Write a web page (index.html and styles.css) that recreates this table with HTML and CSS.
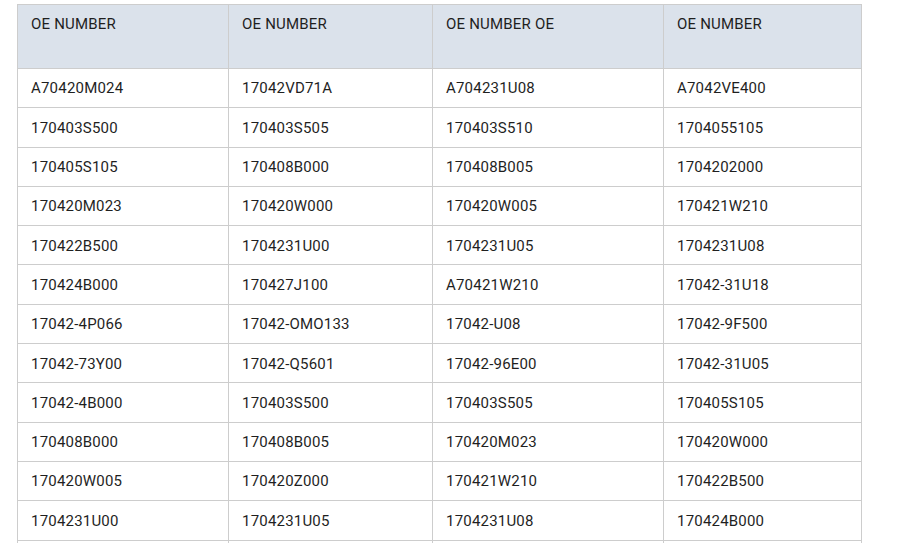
FILE: index.html
```html
<!DOCTYPE html>
<html>
<head>
<meta charset="utf-8">
<link rel="stylesheet" href="styles.css">
</head>
<body>
<div class="wrap">
<table class="oe-table">
<colgroup>
<col class="c1"><col class="c2"><col class="c3"><col class="c4">
</colgroup>
<thead>
<tr><th>OE NUMBER</th><th>OE NUMBER</th><th>OE NUMBER OE</th><th>OE NUMBER</th></tr>
</thead>
<tbody>
<tr><td>A70420M024</td><td>17042VD71A</td><td>A704231U08</td><td>A7042VE400</td></tr>
<tr><td>170403S500</td><td>170403S505</td><td>170403S510</td><td>1704055105</td></tr>
<tr><td>170405S105</td><td>170408B000</td><td>170408B005</td><td>1704202000</td></tr>
<tr><td>170420M023</td><td>170420W000</td><td>170420W005</td><td>170421W210</td></tr>
<tr><td>170422B500</td><td>1704231U00</td><td>1704231U05</td><td>1704231U08</td></tr>
<tr><td>170424B000</td><td>170427J100</td><td>A70421W210</td><td>17042-31U18</td></tr>
<tr><td>17042-4P066</td><td>17042-OMO133</td><td>17042-U08</td><td>17042-9F500</td></tr>
<tr><td>17042-73Y00</td><td>17042-Q5601</td><td>17042-96E00</td><td>17042-31U05</td></tr>
<tr><td>17042-4B000</td><td>170403S500</td><td>170403S505</td><td>170405S105</td></tr>
<tr><td>170408B000</td><td>170408B005</td><td>170420M023</td><td>170420W000</td></tr>
<tr><td>170420W005</td><td>170420Z000</td><td>170421W210</td><td>170422B500</td></tr>
<tr><td>1704231U00</td><td>1704231U05</td><td>1704231U08</td><td>170424B000</td></tr>
<tr><td>170427J100</td><td>17042VD71A</td><td>A704231U08</td><td>A7042VE400</td></tr>
</tbody>
</table>
</div>
</body>
</html>
```
FILE: styles.css
```css
html, body {
  margin: 0;
  padding: 0;
  background: #fff;
}
body {
  font-family: Roboto, "Liberation Sans", Arial, sans-serif;
  font-size: 15px;
  color: #1f1f1f;
  letter-spacing: 0.2px;
}
.wrap {
  padding: 4px 0 0 17px;
}
.oe-table {
  border-collapse: collapse;
  table-layout: fixed;
  width: 844px;
}
.c1 { width: 211px; }
.c2 { width: 204px; }
.c3 { width: 231px; }
.c4 { width: 198px; }
.oe-table th,
.oe-table td {
  border: 1px solid #cdcdcd;
  padding: 11.5px 13px 9.5px;
  text-align: left;
  vertical-align: top;
  line-height: 17.3px;
}
.oe-table th {
  background: #dbe2eb;
  font-weight: 400;
  padding-top: 10.5px;
  padding-bottom: 35.2px;
}
```
